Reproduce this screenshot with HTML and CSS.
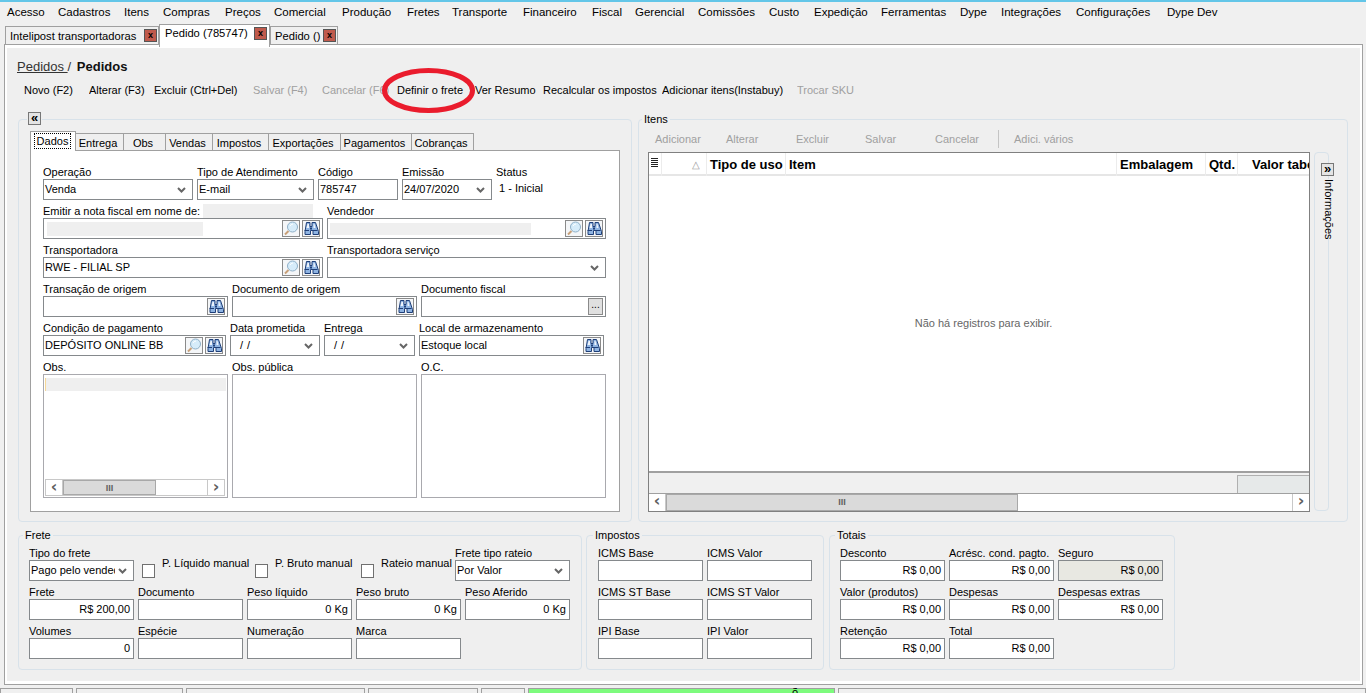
FILE: index.html
```html
<!DOCTYPE html>
<html lang="pt-BR">
<head>
    <meta charset="UTF-8">
    <meta name="viewport" content="width=device-width, initial-scale=1.0">
    <title>Pedido (785747)</title>
    <link rel="stylesheet" href="styles.css">
</head>
<body>
    <svg class="defs" width="0" height="0">
        <symbol id="bino" viewBox="0 0 16 15">
            <path d="M3.500 1.500h3.500v4h2v-4h3.500l3 9v3h-5.500v-4h-2.500v4h-5.500v-3z" fill="#8fb4e2" stroke="#1f3f78"/>
            <path d="M4.500 3h1.500v4h-2.500zM10.500 3h1l1 4h-2z" fill="#eef4fb"/>
            <path d="M1.500 9.500h4.500M10 9.500h4.500" stroke="#1f3f78"/>
            <path d="M7 6.500h2v2h-2z" fill="#1f3f78"/>
        </symbol>
        <symbol id="lens" viewBox="0 0 16 15">
            <circle cx="9.500" cy="6" r="5" fill="#d6ecfa" stroke="#8fb0c8"/>
            <path d="M7 5a3.500 3.500 0 0 1 3-2" fill="none" stroke="#fff"/>
            <path d="M5.500 10l-3.500 3.500" stroke="#c8a078" stroke-width="2"/>
        </symbol>
        <symbol id="chev" viewBox="0 0 9 6">
            <path d="M1 1l3.500 3.500 3.500-3.500" fill="none" stroke="#666" stroke-width="2"/>
        </symbol>
    </svg>

    <div class="topline"></div>

    <div class="menu">
        <span>Acesso</span><span>Cadastros</span><span>Itens</span><span>Compras</span><span>Preços</span>
        <span>Comercial</span><span>Produção</span><span>Fretes</span><span>Transporte</span><span>Financeiro</span>
        <span>Fiscal</span><span>Gerencial</span><span>Comissões</span><span>Custo</span><span>Expedição</span>
        <span>Ferramentas</span><span>Dype</span><span>Integrações</span><span>Configurações</span><span>Dype Dev</span>
    </div>

    <div class="doc-tabs">
        <div class="doc-tab tab-a">Intelipost transportadoras<b class="close">x</b></div>
        <div class="doc-tab tab-b active">Pedido (785747)<b class="close">x</b></div>
        <div class="doc-tab tab-c">Pedido ()<b class="close">x</b></div>
    </div>

    <div class="frame">
        <div class="inner">
            <div class="crumb"><u>Pedidos </u> / <b>Pedidos</b></div>

            <div class="toolbar">
                <span>Novo (F2)</span>
                <span>Alterar (F3)</span>
                <span>Excluir (Ctrl+Del)</span>
                <span class="off">Salvar (F4)</span>
                <span class="off">Cancelar (F6)</span>
                <span>Definir o frete</span>
                <span>Ver Resumo</span>
                <span>Recalcular os impostos</span>
                <span>Adicionar itens(Instabuy)</span>
                <span class="off">Trocar SKU</span>
            </div>

            <!-- marcação em vermelho do print -->
            <svg class="mark" width="97" height="49" viewBox="0 0 97 49">
                <ellipse cx="48.500" cy="24.500" rx="44" ry="20" fill="none" stroke="#ea1c2d" stroke-width="5"/>
            </svg>

            <div class="top-panels">
                <fieldset class="box dados-box">
                    <legend class="collapse-legend"><span class="mini-btn">«</span></legend>
                    <div class="form-tabs">
                        <div class="form-tab active t1"><span class="focus">Dados</span></div>
                        <div class="form-tab t2">Entrega</div>
                        <div class="form-tab t3">Obs</div>
                        <div class="form-tab t4">Vendas</div>
                        <div class="form-tab t5">Impostos</div>
                        <div class="form-tab t6">Exportações</div>
                        <div class="form-tab t7">Pagamentos</div>
                        <div class="form-tab t8">Cobranças</div>
                    </div>
                    <div class="form-panel">
                        <div class="row r1">
                            <div class="cell"><label>Operação</label><div class="field">Venda<svg class="chev"><use href="#chev"/></svg></div></div>
                            <div class="cell"><label>Tipo de Atendimento</label><div class="field">E-mail<svg class="chev"><use href="#chev"/></svg></div></div>
                            <div class="cell"><label>Código</label><div class="field">785747</div></div>
                            <div class="cell"><label>Emissão</label><div class="field">24/07/2020<svg class="chev"><use href="#chev"/></svg></div></div>
                            <div class="cell"><label>Status</label><div class="status">1 - Inicial</div></div>
                        </div>
                        <div class="row r2">
                            <div class="cell"><label>Emitir a nota fiscal em nome de:<i class="hide-a"></i></label>
                                <div class="field"><i class="hide-b"></i><span class="grow"></span><span class="ico"><svg><use href="#lens"/></svg></span><span class="ico"><svg><use href="#bino"/></svg></span></div></div>
                            <div class="cell"><label>Vendedor</label>
                                <div class="field"><i class="hide-c"></i><span class="grow"></span><span class="ico"><svg><use href="#lens"/></svg></span><span class="ico"><svg><use href="#bino"/></svg></span></div></div>
                        </div>
                        <div class="row r2">
                            <div class="cell"><label>Transportadora</label>
                                <div class="field">RWE - FILIAL SP<span class="grow"></span><span class="ico"><svg><use href="#lens"/></svg></span><span class="ico"><svg><use href="#bino"/></svg></span></div></div>
                            <div class="cell"><label>Transportadora serviço</label><div class="field"><svg class="chev"><use href="#chev"/></svg></div></div>
                        </div>
                        <div class="row r3">
                            <div class="cell"><label>Transação de origem</label><div class="field"><span class="grow"></span><span class="ico"><svg><use href="#bino"/></svg></span></div></div>
                            <div class="cell"><label>Documento de origem</label><div class="field"><span class="grow"></span><span class="ico"><svg><use href="#bino"/></svg></span></div></div>
                            <div class="cell"><label>Documento fiscal</label><div class="field"><span class="grow"></span><span class="dots">...</span></div></div>
                        </div>
                        <div class="row r4">
                            <div class="cell"><label>Condição de pagamento</label>
                                <div class="field">DEPÓSITO ONLINE BB<span class="grow"></span><span class="ico"><svg><use href="#lens"/></svg></span><span class="ico"><svg><use href="#bino"/></svg></span></div></div>
                            <div class="cell"><label>Data prometida</label><div class="field date">/ /<svg class="chev"><use href="#chev"/></svg></div></div>
                            <div class="cell"><label>Entrega</label><div class="field date">/ /<svg class="chev"><use href="#chev"/></svg></div></div>
                            <div class="cell"><label>Local de armazenamento</label><div class="field">Estoque local<span class="grow"></span><span class="ico"><svg><use href="#bino"/></svg></span></div></div>
                        </div>
                        <div class="row r3">
                            <div class="cell"><label>Obs.</label>
                                <div class="memo">
                                    <div class="memo-line"></div>
                                    <div class="hscroll small">
                                        <span class="arrow">‹</span><span class="thumb">III</span><span class="track"></span><span class="arrow">›</span>
                                    </div>
                                </div>
                            </div>
                            <div class="cell"><label>Obs. pública</label><div class="memo"></div></div>
                            <div class="cell"><label>O.C.</label><div class="memo"></div></div>
                        </div>
                    </div>
                </fieldset>

                <fieldset class="box itens-box">
                    <legend>Itens</legend>
                    <div class="itens-bar">
                        <span class="b1">Adicionar</span><span class="b2">Alterar</span><span class="b3">Excluir</span><span class="b4">Salvar</span><span class="b5">Cancelar</span><span class="b6">Adici. vários</span>
                    </div>
                    <div class="itens-body">
                        <div class="grid">
                            <div class="grid-head">
                                <span class="c0"><i class="rows-ico"></i></span>
                                <span class="c1">△</span>
                                <span class="c2">Tipo de uso</span>
                                <span class="c3">Item</span>
                                <span class="c4">Embalagem</span>
                                <span class="c5">Qtd.</span>
                                <span class="c6">Valor tabela</span>
                            </div>
                            <div class="grid-empty">Não há registros para exibir.</div>
                            <div class="grid-sum"><span class="sum-cell"></span></div>
                            <div class="hscroll big">
                                <span class="arrow">‹</span><span class="thumb">III</span><span class="track"></span><span class="arrow">›</span>
                            </div>
                        </div>
                        <div class="rail">
                            <span class="mini-btn">»</span>
                            <span class="rail-text">Informações</span>
                        </div>
                    </div>
                </fieldset>
            </div>

            <div class="bottom-panels">
                <fieldset class="box frete-box">
                    <legend>Frete</legend>
                    <div class="row f0">
                        <div class="cell"><label>Tipo do frete</label><div class="field"><span class="cut">Pago pelo vendedor</span><svg class="chev"><use href="#chev"/></svg></div></div>
                        <div class="check"><i></i><span>P. Líquido manual</span></div>
                        <div class="check"><i></i><span>P. Bruto manual</span></div>
                        <div class="check"><i></i><span>Rateio manual</span></div>
                        <div class="cell"><label>Frete tipo rateio</label><div class="field">Por Valor<svg class="chev"><use href="#chev"/></svg></div></div>
                    </div>
                    <div class="row f1">
                        <div class="cell"><label>Frete</label><div class="field num">R$ 200,00</div></div>
                        <div class="cell"><label>Documento</label><div class="field"></div></div>
                        <div class="cell"><label>Peso líquido</label><div class="field num">0 Kg</div></div>
                        <div class="cell"><label>Peso bruto</label><div class="field num">0 Kg</div></div>
                        <div class="cell"><label>Peso Aferido</label><div class="field num">0 Kg</div></div>
                    </div>
                    <div class="row f1">
                        <div class="cell"><label>Volumes</label><div class="field num">0</div></div>
                        <div class="cell"><label>Espécie</label><div class="field"></div></div>
                        <div class="cell"><label>Numeração</label><div class="field"></div></div>
                        <div class="cell"><label>Marca</label><div class="field"></div></div>
                    </div>
                </fieldset>

                <fieldset class="box impostos-box">
                    <legend>Impostos</legend>
                    <div class="row f1">
                        <div class="cell"><label>ICMS Base</label><div class="field"></div></div>
                        <div class="cell"><label>ICMS Valor</label><div class="field"></div></div>
                    </div>
                    <div class="row f1">
                        <div class="cell"><label>ICMS ST Base</label><div class="field"></div></div>
                        <div class="cell"><label>ICMS ST Valor</label><div class="field"></div></div>
                    </div>
                    <div class="row f1">
                        <div class="cell"><label>IPI Base</label><div class="field"></div></div>
                        <div class="cell"><label>IPI Valor</label><div class="field"></div></div>
                    </div>
                </fieldset>

                <fieldset class="box totais-box">
                    <legend>Totais</legend>
                    <div class="row f1">
                        <div class="cell"><label>Desconto</label><div class="field num">R$ 0,00</div></div>
                        <div class="cell"><label>Acrésc. cond. pagto.</label><div class="field num">R$ 0,00</div></div>
                        <div class="cell"><label>Seguro</label><div class="field num readonly">R$ 0,00</div></div>
                    </div>
                    <div class="row f1">
                        <div class="cell"><label>Valor (produtos)</label><div class="field num">R$ 0,00</div></div>
                        <div class="cell"><label>Despesas</label><div class="field num">R$ 0,00</div></div>
                        <div class="cell"><label>Despesas extras</label><div class="field num">R$ 0,00</div></div>
                    </div>
                    <div class="row f1">
                        <div class="cell"><label>Retenção</label><div class="field num">R$ 0,00</div></div>
                        <div class="cell"><label>Total</label><div class="field num">R$ 0,00</div></div>
                    </div>
                </fieldset>
            </div>
        </div>
    </div>

    <div class="status-bar">
        <span class="s1"></span><span class="s2"></span><span class="s3"></span><span class="s4"></span><span class="s5"></span><span class="s6">õ</span><span class="s7"></span>
    </div>
</body>
</html>
```

FILE: styles.css
```css
*{
    margin: 0;
    padding: 0;
    box-sizing: border-box;
}
body{
    width: 1366px;
    height: 693px;
    overflow: hidden;
    display: flex;
    flex-direction: column;
    background-color: #f0f0f0;
    color: #000;
    font: 11px/14px "Liberation Sans", Arial, sans-serif;
}
.defs{
    position: absolute;
}
.topline{
    height: 2px;
    background-color: #63c6e8;
}

/* menu */
.menu{
    height: 22px;
    padding: 0 0 2px 7px;
    display: grid;
    grid-template-columns: 51px 66px 39px 62px 49px 68px 65px 45px 71px 69px 43px 63px 71px 45px 67px 79px 41px 75px 91px 80px;
    align-items: center;
    font-size: 11.500px;
}

/* abas de documento */
.doc-tabs{
    height: 20px;
    padding-left: 5px;
    display: flex;
    align-items: flex-end;
    position: relative;
    z-index: 1;
}
.doc-tab{
    height: 18px;
    display: flex;
    align-items: center;
    justify-content: space-between;
    padding: 0 1px 0 4px;
    border: 1px solid #a0a0a0;
    border-bottom: 0;
    font-size: 11.200px;
    white-space: nowrap;
}
.doc-tab.active{
    height: 23px;
    margin-bottom: -3px;
    padding: 0 2px 6px 5px;
    background-color: #fff;
}
.tab-a{ width: 154px; }
.tab-b{ width: 111px; }
.tab-c{ width: 68px; }
.close{
    width: 13px;
    height: 13px;
    border: 1px solid #555;
    background-color: #c05a4c;
    color: #000;
    font: bold 9px/10px "Liberation Sans", sans-serif;
    text-align: center;
}

/* quadro principal */
.frame{
    width: 1359px;
    height: 641px;
    margin-left: 4px;
    padding: 3px 2px 3px 2px;
    background-color: #fff;
    border: 1px solid #a0a0a0;
}
.inner{
    height: 100%;
    padding: 10px 0 0 10px;
    background-color: #efefef;
    position: relative;
}
.crumb{
    height: 18px;
    font-size: 13px;
    line-height: 18px;
    color: #333;
}
.crumb b{
    margin-left: 2px;
    color: #111;
}
.toolbar{
    height: 18px;
    margin: 5px 0 0 7px;
    display: grid;
    grid-template-columns: 65px 65px 99px 69px 75px 78px 68px 119px 135px 80px;
    align-items: center;
    white-space: nowrap;
}
.toolbar span{
    overflow: hidden;
}
.off{
    color: #a0a0a0;
}
.mark{
    position: absolute;
    left: 373px;
    top: 18px;
}

/* fieldsets */
.box{
    border: 1px solid #d8e2ea;
    border-radius: 4px;
}
.box legend{
    margin-left: -5px;
    padding: 0 2px;
    height: 14px;
    line-height: 14px;
}
.top-panels{
    height: 410px;
    margin: 13px 0 0 1px;
    display: flex;
    gap: 6px;
}
.dados-box{
    width: 614px;
    padding: 5px 11px 9px 11px;
}
.itens-box{
    width: 710px;
    padding: 4px 9px 10px 9px;
}
.box.itens-box legend,
.box.frete-box legend{
    margin-left: -6px;
}
.box .collapse-legend{
    margin-left: -3px;
    padding: 0 1px;
}
.mini-btn{
    display: block;
    width: 13px;
    height: 13px;
    border: 1px solid #777;
    background-color: #e4e4e4;
    font: bold 13px/9px "Liberation Sans", sans-serif;
    text-align: center;
}

/* abas do formulario */
.form-tabs{
    height: 20px;
    margin-bottom: -1px;
    display: flex;
    align-items: flex-end;
    position: relative;
    z-index: 1;
}
.form-tab{
    height: 18px;
    padding-right: 3px;
    border: 1px solid #a0a0a0;
    background-color: #efefef;
    text-align: center;
    line-height: 18px;
    margin-right: -1px;
}
.form-tab.active{
    height: 20px;
    background-color: #fff;
    border-bottom: 0;
    padding: 1px 4px 2px 3px;
}
.focus{
    display: block;
    line-height: 14px;
    border: 1px dotted #000;
}
.t1{ width: 46px; }
.t2{ width: 49px; }
.t3{ width: 43px; }
.t4{ width: 48px; }
.t5{ width: 57px; }
.t6{ width: 73px; }
.t7{ width: 72px; }
.t8{ width: 63px; }
.form-panel{
    height: 362px;
    padding: 14px 12px 0 12px;
    border: 1px solid #a0a0a0;
    background-color: #fff;
}
.row{
    display: grid;
    column-gap: 4px;
    margin-bottom: 4px;
}
.r1{ grid-template-columns: 150px 117px 80px 90px 100px; }
.r2{ grid-template-columns: 280px 279px; }
.r3{ grid-template-columns: 185px 185px 185px; }
.r4{ grid-template-columns: 183px 90px 91px 185px; }
.cell{
    min-width: 0;
    white-space: nowrap;
}
.cell label{
    display: flex;
    height: 14px;
    line-height: 14px;
}
.field{
    height: 21px;
    padding: 0 2px 2px 1px;
    display: flex;
    align-items: center;
    border: 1px solid #85898c;
    background-color: #fff;
    overflow: hidden;
}
.field.num{
    justify-content: flex-end;
    padding-right: 3px;
}
.field.readonly{
    background-color: #e8e8e2;
}
.field.date{
    padding-left: 9px;
    word-spacing: 1px;
}
.cut{
    flex: 1;
    min-width: 0;
    overflow: hidden;
}
.chev{
    flex: none;
    width: 9px;
    height: 6px;
    margin: 2px 4px 0 auto;
}
.cut + .chev{
    margin-left: 3px;
}
.grow{
    flex: 1;
}
.ico{
    flex: none;
    width: 18px;
    height: 17px;
    margin: 2px 0 0 2px;
    border: 1px solid #8a8a8a;
    background-color: #f4f6f8;
    display: flex;
}
.ico svg{
    width: 16px;
    height: 15px;
}
.dots{
    flex: none;
    width: 15px;
    height: 17px;
    margin-top: 2px;
    border: 1px solid #8a8a8a;
    background-color: #e0e0e0;
    text-align: center;
    line-height: 12px;
    font-size: 10px;
}
.status{
    padding: 2px 0 0 3px;
}
.hide-a{
    width: 110px;
    height: 14px;
    margin-left: 3px;
    background-color: #efefef;
}
.hide-b{
    width: 156px;
    height: 14px;
    margin: 2px 0 0 2px;
    background-color: #efefef;
}
.hide-c{
    width: 201px;
    height: 12px;
    margin: 2px 0 0 1px;
    background-color: #efefef;
}
.memo{
    height: 124px;
    padding: 3px 2px 1px 1px;
    display: flex;
    flex-direction: column;
    justify-content: space-between;
    border: 1px solid #a9a9ae;
    background-color: #fff;
}
.memo-line{
    height: 13px;
    margin-right: -1px;
    background-color: #efefef;
    border-left: 1px solid #f6d898;
}

/* barras de rolagem */
.hscroll{
    display: flex;
    background-color: #fff;
}
.hscroll.small{
    height: 17px;
    border: 1px solid #c8c8c8;
}
.hscroll.big{
    height: 18px;
    border-top: 1px solid #a0a0a0;
}
.arrow{
    flex: none;
    width: 17px;
    font: bold 16px/13px "DejaVu Sans", sans-serif;
    color: #606060;
    text-align: center;
    border-right: 1px solid #c8c8c8;
}
.hscroll .arrow:last-child{
    border-right: 0;
    border-left: 1px solid #c8c8c8;
}
.thumb{
    background-color: #dadada;
    border: 1px solid #a8a8a8;
    color: #606060;
    font: bold 9px/14px "Liberation Sans", sans-serif;
    text-align: center;
}
.small .thumb{
    width: 93px;
}
.big .thumb{
    width: 352px;
}
.track{
    flex: 1;
}

/* itens */
.itens-bar{
    height: 22px;
    display: grid;
    grid-template-columns: 71px 70px 69px 70px 63px 100px;
    padding: 0 0 4px 7px;
    align-items: center;
    color: #a0a0a0;
}
.b6{
    padding-left: 15px;
    border-left: 1px solid #c4c4c4;
    height: 18px;
    line-height: 18px;
}
.itens-body{
    display: flex;
    gap: 4px;
}
.grid{
    width: 662px;
    height: 360px;
    display: flex;
    flex-direction: column;
    border: 1px solid #808080;
    background-color: #fff;
    overflow: hidden;
}
.grid-head{
    height: 23px;
    flex: none;
    display: grid;
    grid-template-columns: 12px 45px 79px 331px 89px 32px 100px;
    border-bottom: 2px solid #e6e6e6;
    font: bold 13px/23px "Liberation Sans", sans-serif;
    white-space: nowrap;
}
.grid-head span{
    padding-left: 3px;
    border-left: 1px solid #ececec;
}
.grid-head .c0{
    padding: 5px 0 0 2px;
    border-left: 0;
}
.grid-head .c1{
    padding: 0 6px 0 0;
    text-align: right;
    color: #999;
    font-weight: normal;
    font-size: 10px;
}
.grid-head .c6{
    padding-left: 14px;
}
.rows-ico{
    display: block;
    width: 7px;
    height: 10px;
    background: repeating-linear-gradient(#222 0 1px, #fff 1px 2px);
}
.grid-empty{
    flex: 1;
    display: flex;
    align-items: center;
    justify-content: center;
    padding: 0 0 2px 9px;
    color: #666;
}
.grid-sum{
    height: 22px;
    flex: none;
    display: flex;
    justify-content: flex-end;
    padding-top: 2px;
    border-top: 2px solid #a0a0a0;
    background-color: #f0f0f0;
}
.sum-cell{
    width: 72px;
    height: 19px;
    border: 1px solid #b0b0b0;
    border-right: 0;
    background-color: #e6e9e9;
}
.rail{
    width: 15px;
    height: 359px;
    border: 1px solid #d8e2ea;
    border-radius: 4px;
    position: relative;
}
.rail .mini-btn{
    position: absolute;
    left: 6px;
    top: 10px;
    font-size: 13px;
}
.rail-text{
    position: absolute;
    left: 7px;
    top: 26px;
    height: 60px;
    width: 14px;
    background-color: #efefef;
    writing-mode: vertical-rl;
    white-space: nowrap;
    line-height: 14px;
}

/* paineis de baixo */
.bottom-panels{
    height: 142px;
    margin: 6px 0 0 1px;
    display: flex;
    gap: 4px;
}
.bottom-panels .box{
    padding-top: 4px;
}
.frete-box{
    width: 564px;
    padding-left: 10px;
}
.impostos-box{
    width: 238px;
    padding-left: 11px;
}
.totais-box{
    width: 346px;
    margin-left: 1px;
    padding-left: 10px;
}
.frete-box .f1{
    grid-template-columns: repeat(5, 105px);
}
.impostos-box .f1{
    grid-template-columns: repeat(2, 105px);
}
.totais-box .f1{
    grid-template-columns: repeat(3, 105px);
}
.f0{
    grid-template-columns: 105px 105px 98px 86px 115px;
    column-gap: 8px;
}
.check{
    display: flex;
    white-space: nowrap;
    padding-top: 18px;
    gap: 7px;
}
.check i{
    flex: none;
    width: 13px;
    height: 14px;
    border: 1px solid #707070;
    background-color: #fff;
}
.check span{
    margin-top: -8px;
}

/* barra de status */
.status-bar{
    height: 5px;
    margin-top: 3px;
    display: flex;
    overflow: hidden;
}
.status-bar span{
    height: 8px;
    border: 1px solid #a0a0a0;
}
.s1{ width: 73px; margin-right: 3px; }
.s2{ width: 107px; margin-right: 3px; }
.s3{ width: 179px; margin-right: 3px; }
.s4{ width: 110px; margin-right: 3px; }
.s5{ width: 44px; margin-right: 3px; }
.s6{
    width: 307px;
    margin-right: 3px;
    background-color: #7dfb7d;
    padding-left: 263px;
    line-height: 6px;
}
.s7{ flex: 1; }
```
